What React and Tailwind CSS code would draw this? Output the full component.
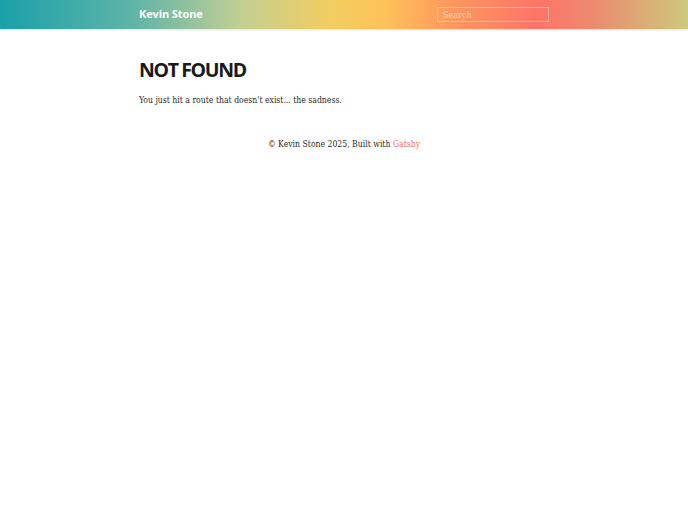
export default function App() {
  return (
    <div className="min-h-[512px] bg-white">
      <header className="h-[29px] bg-[linear-gradient(90deg,#1aa0a8_0%,#62b5a8_20%,#c3cf92_35%,#f2cd60_48%,#ffc25a_56%,#ff9a5e_65%,#ff7468_78%,#ec8a6e_86%,#cdc97c_100%)] shadow-[0_1px_2px_rgba(0,0,0,0.12)]">
        <div className="mx-auto flex h-full max-w-[410px] items-center justify-between">
          <a className="font-['Open_Sans',sans-serif] text-[11px] font-bold tracking-[-0.01em] text-white">Kevin Stone</a>
          <input
            placeholder="Search"
            className="h-[15px] w-[112px] border border-white/40 bg-transparent px-[5px] font-['DejaVu_Serif_Condensed','DejaVu_Serif',serif] text-[9px] text-white placeholder:text-white/60 outline-none"
          />
        </div>
      </header>
      <main className="mx-auto max-w-[410px] pt-[27px]">
        <h1 className="font-['Open_Sans',sans-serif] text-[19.5px] font-bold tracking-[-0.07em] leading-[28px] text-[#1a1a1a]">
          NOT FOUND
        </h1>
        <p className="mt-[10px] font-['DejaVu_Serif_Condensed','DejaVu_Serif',serif] text-[8.6px] text-[#2b2b2b]">
          You just hit a route that doesn't exist... the sadness.
        </p>
      </main>
      <footer className="mt-[31px] text-center font-['DejaVu_Serif_Condensed','DejaVu_Serif',serif] text-[8.6px] text-[#2b2b2b]">
        © Kevin Stone 2025, Built with <a className="text-[#f0705f]">Gatsby</a>
      </footer>
    </div>
  );
}
